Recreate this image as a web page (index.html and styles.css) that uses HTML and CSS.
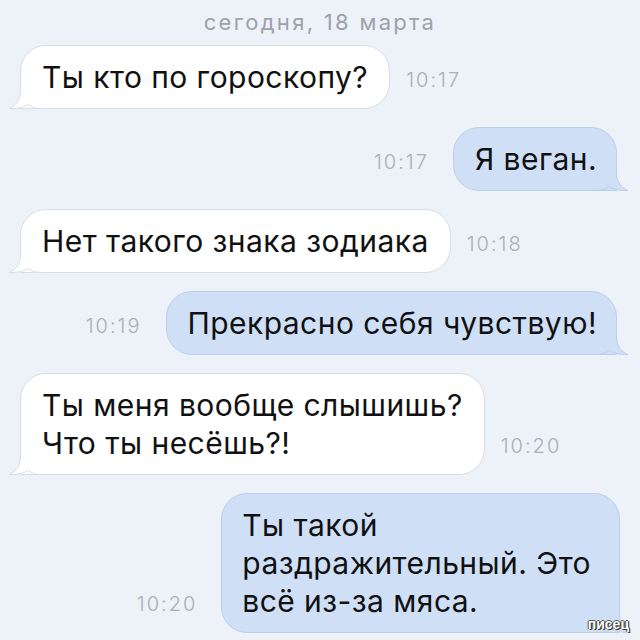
FILE: index.html
```html
<!DOCTYPE html>
<html lang="ru">
<head>
<meta charset="utf-8">
<title>Чат</title>
<link rel="stylesheet" href="styles.css">
</head>
<body>
<div class="chat">
  <div class="date">сегодня, 18 марта</div>

  <div class="row in">
    <div class="bubble">Ты кто по гороскопу?<svg class="tail" viewBox="0 0 34 30"><path class="f" d="M12.5 0 V12 C12.5 21 7.5 27 1 29.5 C8 30 15 28.5 20 25.5 C24 28.5 28 29.5 34 29.5 L34 0 Z"/><path class="s" d="M12.5 0 V12 C12.5 21 7.5 27 1 29.5 C8 30 15 28.5 20 25.5 C24 28.5 28 29.5 34 29.5"/></svg></div>
    <span class="time">10:17</span>
  </div>

  <div class="row out">
    <span class="time">10:17</span>
    <div class="bubble">Я веган.<svg class="tail" viewBox="0 0 34 30"><path class="f" d="M12.5 0 V12 C12.5 21 7.5 27 1 29.5 C8 30 15 28.5 20 25.5 C24 28.5 28 29.5 34 29.5 L34 0 Z"/><path class="s" d="M12.5 0 V12 C12.5 21 7.5 27 1 29.5 C8 30 15 28.5 20 25.5 C24 28.5 28 29.5 34 29.5"/></svg></div>
  </div>

  <div class="row in">
    <div class="bubble">Нет такого знака зодиака<svg class="tail" viewBox="0 0 34 30"><path class="f" d="M12.5 0 V12 C12.5 21 7.5 27 1 29.5 C8 30 15 28.5 20 25.5 C24 28.5 28 29.5 34 29.5 L34 0 Z"/><path class="s" d="M12.5 0 V12 C12.5 21 7.5 27 1 29.5 C8 30 15 28.5 20 25.5 C24 28.5 28 29.5 34 29.5"/></svg></div>
    <span class="time">10:18</span>
  </div>

  <div class="row out">
    <span class="time">10:19</span>
    <div class="bubble">Прекрасно себя чувствую!<svg class="tail" viewBox="0 0 34 30"><path class="f" d="M12.5 0 V12 C12.5 21 7.5 27 1 29.5 C8 30 15 28.5 20 25.5 C24 28.5 28 29.5 34 29.5 L34 0 Z"/><path class="s" d="M12.5 0 V12 C12.5 21 7.5 27 1 29.5 C8 30 15 28.5 20 25.5 C24 28.5 28 29.5 34 29.5"/></svg></div>
  </div>

  <div class="row in">
    <div class="bubble">Ты меня вообще слышишь?<br>Что ты несёшь?!<svg class="tail" viewBox="0 0 34 30"><path class="f" d="M12.5 0 V12 C12.5 21 7.5 27 1 29.5 C8 30 15 28.5 20 25.5 C24 28.5 28 29.5 34 29.5 L34 0 Z"/><path class="s" d="M12.5 0 V12 C12.5 21 7.5 27 1 29.5 C8 30 15 28.5 20 25.5 C24 28.5 28 29.5 34 29.5"/></svg></div>
    <span class="time">10:20</span>
  </div>

  <div class="row out last">
    <span class="time">10:20</span>
    <div class="bubble wide">Ты такой<br>раздражительный. Это<br>всё из-за мяса.<svg class="tail" viewBox="0 0 34 30"><path class="f" d="M12.5 0 V12 C12.5 21 7.5 27 1 29.5 C8 30 15 28.5 20 25.5 C24 28.5 28 29.5 34 29.5 L34 0 Z"/><path class="s" d="M12.5 0 V12 C12.5 21 7.5 27 1 29.5 C8 30 15 28.5 20 25.5 C24 28.5 28 29.5 34 29.5"/></svg></div>
  </div>
</div>
<span class="mark">писец</span>
</body>
</html>
```
FILE: styles.css
```css
html, body {
  margin: 0;
  padding: 0;
}
body {
  width: 640px;
  height: 640px;
  overflow: hidden;
  position: relative;
  background: #edf1f8;
  font-family: Inter, "Liberation Sans", sans-serif;
  color: #111;
}
.chat {
  display: flex;
  flex-direction: column;
  gap: 18px;
  padding: 9px 23px 0 20px;
}
.date {
  text-align: center;
  padding-left: 3px;
  font-size: 22px;
  letter-spacing: 2.3px;
  line-height: 26px;
  color: #9ca2aa;
  margin-bottom: -8px;
}
.row {
  display: flex;
  align-items: flex-end;
}
.row.out {
  justify-content: flex-end;
}
.row.last {
  margin-right: -3px;
}
.bubble {
  position: relative;
  font-size: 30px;
  letter-spacing: 0.45px;
  line-height: 38px;
  padding: 12px 21px;
  border: 1px solid #d8dee7;
  border-radius: 26px;
  background: #fff;
  white-space: nowrap;
}
.in .bubble {
  border-bottom-left-radius: 0;
}
.out .bubble {
  padding-right: 19px;
  background: #cfe0f6;
  border-color: #bccfe9;
  border-bottom-right-radius: 0;
}
.out .bubble.wide {
  padding-left: 20px;
  padding-right: 28px;
}
.tail {
  position: absolute;
  bottom: -1px;
  left: -13px;
  width: 34px;
  height: 30px;
  overflow: visible;
}
.out .tail {
  left: auto;
  right: -13px;
  transform: scaleX(-1);
}
.tail .f {
  fill: #fff;
}
.tail .s {
  fill: none;
  stroke: #d8dee7;
  stroke-width: 1;
}
.out .tail .f {
  fill: #cfe0f6;
}
.out .tail .s {
  stroke: #bccfe9;
}
.time {
  font-size: 20px;
  letter-spacing: 2px;
  font-weight: 300;
  line-height: 20px;
  color: #a9afb7;
  margin-bottom: 19px;
}
.in .time {
  margin-left: 16px;
}
.out .time {
  margin-right: 24px;
}
.mark {
  position: absolute;
  right: 11px;
  bottom: 8px;
  font-family: "Liberation Sans", sans-serif;
  font-size: 14px;
  font-weight: bold;
  color: #fff;
  text-shadow: 1px 1px 0 #333, -1px 0 0 #555, 0 -1px 0 #555, 1px 0 0 #333;
}
```
